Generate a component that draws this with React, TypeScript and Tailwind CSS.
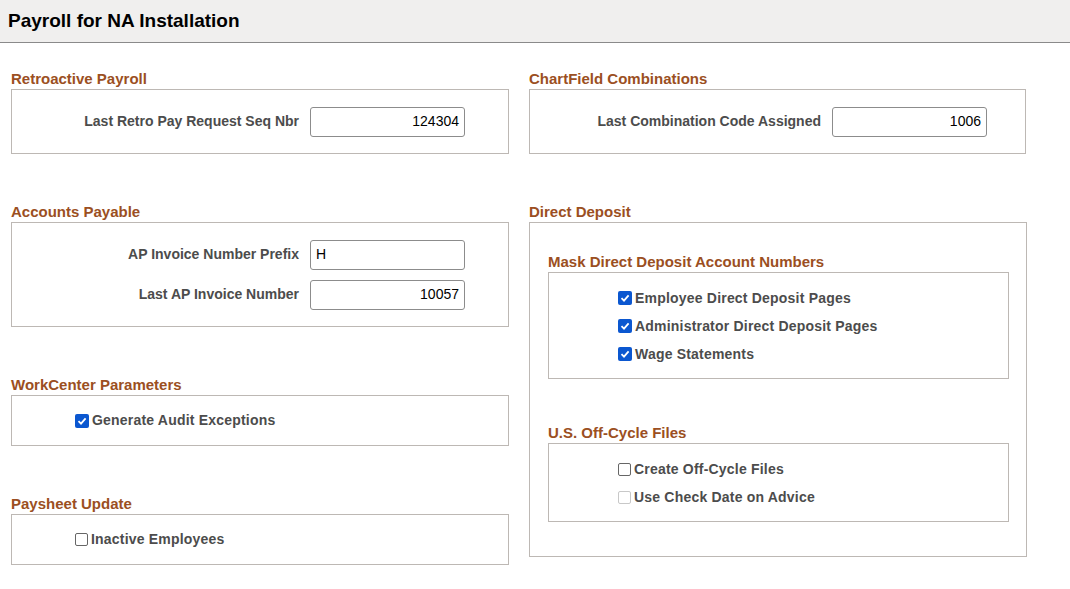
const brown = "text-[#9b4f22]";

const Heading = ({ children }: { children: React.ReactNode }) => (
  <div className={`h-[20px] leading-[20px] text-[15px] font-bold ${brown}`}>{children}</div>
);

const Field = ({ label, value, right = true, labelW }: { label: string; value: string; right?: boolean; labelW: string }) => (
  <div className="flex items-center h-[30px]">
    <div className={`${labelW} text-right pr-[11px] text-[14px] font-bold text-[#4c4c4c]`}>{label}</div>
    <div className={`w-[155px] h-[30px] border border-[#8c8c8c] rounded-[3px] bg-white px-[5px] flex items-center text-[14px] text-black ${right ? "justify-end" : "justify-start"}`}>
      {value}
    </div>
  </div>
);

const Check = ({ label, checked, disabled }: { label: string; checked?: boolean; disabled?: boolean }) => (
  <div className="flex items-center h-[28px] gap-[3px]">
    {checked ? (
      <svg width="14" height="14" viewBox="0 0 14 14">
        <rect x="0" y="0" width="14" height="14" rx="2" fill="#0b57d0" />
        <path d="M3.5 7.2 L6 9.6 L10.6 4.4" stroke="white" strokeWidth="1.8" fill="none" />
      </svg>
    ) : (
      <div className={`w-[13px] h-[13px] rounded-[2px] border ${disabled ? "border-[#c8c8c8]" : "border-[#666]"}`} />
    )}
    <span className="text-[14px] font-bold text-[#4c4c4c] tracking-[0.2px]">{label}</span>
  </div>
);

const box = "border border-[#bdb8b4]";

export default function App() {
  return (
    <div className="w-[1070px] h-[589px] bg-white" style={{ fontFamily: '"Liberation Sans", Arial, sans-serif' }}>
      <div className="h-[43px] bg-[#f0efee] border-b border-[#8a8a8a] flex items-center px-[8px]">
        <h1 className="text-[19px] font-bold text-black">Payroll for NA Installation</h1>
      </div>
      <div className="flex pt-[26px]">
        <div className="ml-[11px] w-[498px] flex flex-col">
          <Heading>Retroactive Payroll</Heading>
          <div className={`${box} h-[65px] flex items-center`}>
            <Field label="Last Retro Pay Request Seq Nbr" value="124304" labelW="w-[298px]" />
          </div>
          <div className="h-[48px]" />
          <Heading>Accounts Payable</Heading>
          <div className={`${box} h-[105px] flex flex-col justify-center gap-[10px]`}>
            <Field label="AP Invoice Number Prefix" value="H" right={false} labelW="w-[298px]" />
            <Field label="Last AP Invoice Number" value="10057" labelW="w-[298px]" />
          </div>
          <div className="h-[48px]" />
          <Heading>WorkCenter Parameters</Heading>
          <div className={`${box} h-[51px] flex items-center pl-[63px]`}>
            <Check label="Generate Audit Exceptions" checked />
          </div>
          <div className="h-[48px]" />
          <Heading>Paysheet Update</Heading>
          <div className={`${box} h-[51px] flex items-center pl-[63px]`}>
            <Check label="Inactive Employees" />
          </div>
        </div>
        <div className="ml-[20px] w-[498px] flex flex-col">
          <Heading>ChartField Combinations</Heading>
          <div className={`${box} w-[497px] h-[65px] flex items-center`}>
            <Field label="Last Combination Code Assigned" value="1006" labelW="w-[302px]" />
          </div>
          <div className="h-[48px]" />
          <Heading>Direct Deposit</Heading>
          <div className={`${box} h-[335px] pl-[18px] pt-[29px]`}>
            <Heading>Mask Direct Deposit Account Numbers</Heading>
            <div className={`${box} w-[461px] h-[107px] pl-[69px] pt-[11px]`}>
              <Check label="Employee Direct Deposit Pages" checked />
              <Check label="Administrator Direct Deposit Pages" checked />
              <Check label="Wage Statements" checked />
            </div>
            <div className="h-[44px]" />
            <Heading>U.S. Off-Cycle Files</Heading>
            <div className={`${box} w-[461px] h-[79px] pl-[69px] pt-[11px]`}>
              <Check label="Create Off-Cycle Files" />
              <Check label="Use Check Date on Advice" disabled />
            </div>
          </div>
        </div>
      </div>
    </div>
  );
}
